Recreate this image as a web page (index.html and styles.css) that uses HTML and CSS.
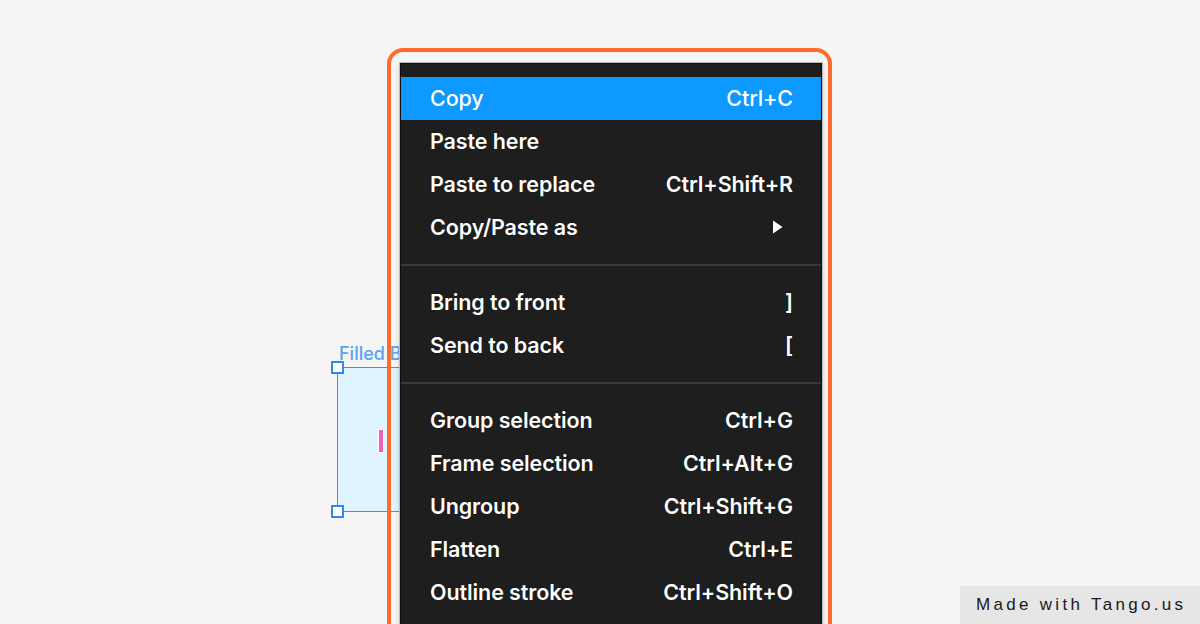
FILE: index.html
```html
<!DOCTYPE html>
<html>
<head>
    <title>Context menu</title>
    <link rel="stylesheet" href="styles.css">
</head>
<body>
    <div class="canvas">
        <div class="shape">
            <span class="shape-label">Filled Box</span>
            <span class="handle tl"></span>
            <span class="handle bl"></span>
            <span class="caret"></span>
        </div>

        <div class="focus-ring"></div>

        <div class="menu">
            <div class="item active"><span>Copy</span><span>Ctrl+C</span></div>
            <div class="item"><span>Paste here</span><span></span></div>
            <div class="item"><span>Paste to replace</span><span>Ctrl+Shift+R</span></div>
            <div class="item"><span>Copy/Paste as</span>
                <svg class="arrow" width="11" height="14" viewBox="0 0 11 14"><path d="M1 0.5 L10.5 7 L1 13.5 Z" fill="#fff"/></svg>
            </div>
            <div class="sep"></div>
            <div class="item"><span>Bring to front</span><span>]</span></div>
            <div class="item"><span>Send to back</span><span>[</span></div>
            <div class="sep"></div>
            <div class="item"><span>Group selection</span><span>Ctrl+G</span></div>
            <div class="item"><span>Frame selection</span><span>Ctrl+Alt+G</span></div>
            <div class="item"><span>Ungroup</span><span>Ctrl+Shift+G</span></div>
            <div class="item"><span>Flatten</span><span>Ctrl+E</span></div>
            <div class="item"><span>Outline stroke</span><span>Ctrl+Shift+O</span></div>
        </div>

        <div class="tango">Made with Tango.us</div>
    </div>
</body>
</html>
```

FILE: styles.css
```css
body {
    margin: 0;
    background-color: #f5f5f5;
    font-family: 'Inter', 'Noto Sans', sans-serif;
    overflow: hidden;
}
.canvas {
    position: relative;
    width: 1200px;
    height: 624px;
    overflow: hidden;
}
.shape {
    position: absolute;
    left: 337px;
    top: 367px;
    width: 200px;
    height: 145px;
    background-color: #e0f4ff;
    border: 1.5px solid #3d8ef5;
    box-sizing: border-box;
}
.shape-label {
    position: absolute;
    left: 1px;
    top: -25px;
    font-size: 18px;
    font-weight: 500;
    color: #5ba2f0;
    white-space: nowrap;
}
.handle {
    position: absolute;
    width: 13px;
    height: 13px;
    background: #fff;
    border: 2px solid #2f88f5;
    box-sizing: border-box;
    left: -7px;
}
.handle.tl { top: -7px; }
.handle.bl { bottom: -7px; }
.caret {
    position: absolute;
    left: 41px;
    top: 62px;
    width: 4px;
    height: 22px;
    background: #f05cbf;
    box-shadow: 0 0 0 1px #fff;
}
.focus-ring {
    position: absolute;
    left: 387px;
    top: 48px;
    width: 445px;
    height: 620px;
    border: 4px solid #ff6b2b;
    border-radius: 16px;
    box-sizing: border-box;
}
.menu {
    position: absolute;
    left: 400px;
    top: 63px;
    width: 420px;
    height: 600px;
    padding-top: 13px;
    background-color: #1e1e1e;
    border: 1px solid #0e0e0e;
    box-shadow: 0 0 0 1px #bdbdbd, 0 2px 6px rgba(0, 0, 0, 0.2);
    color: #fff;
}
.item {
    height: 43px;
    box-sizing: border-box;
    display: flex;
    justify-content: space-between;
    align-items: center;
    padding: 0 28px 2px 29px;
    font-size: 21.5px;
    font-weight: 600;
    letter-spacing: -0.1px;
    text-shadow: 0 0 1px #000;
}
.item.active {
    background-color: #0d99ff;
    font-weight: 500;
    text-shadow: none;
}
.arrow {
    margin-right: 10px;
}
.sep {
    height: 2px;
    margin: 15px 0;
    background-color: #383838;
}
.tango {
    position: absolute;
    right: 0;
    bottom: 0;
    width: 240px;
    height: 38px;
    box-sizing: border-box;
    padding-left: 16px;
    background-color: #e6e6e6;
    font-family: 'Liberation Sans', Arial, sans-serif;
    font-size: 17px;
    letter-spacing: 3.3px;
    line-height: 38px;
    color: #1a1a1a;
}
```
